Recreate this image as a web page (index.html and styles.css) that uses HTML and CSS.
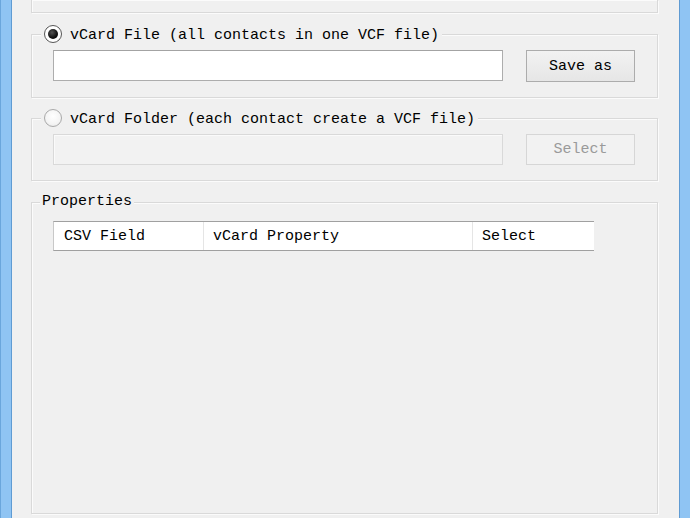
FILE: index.html
```html
<!DOCTYPE html>
<html>
<head>
<meta charset="utf-8">
<link rel="stylesheet" href="styles.css">
</head>
<body>
<div class="window">
  <div class="frame frame-left"></div>
  <div class="client">
    <div class="group group-top"></div>

    <div class="group group-file">
      <div class="group-title">
        <span class="radio checked"></span>
        <span class="label">vCard File (all contacts in one VCF file)</span>
      </div>
      <div class="row">
        <div class="textbox"></div>
        <div class="button">Save as</div>
      </div>
    </div>

    <div class="group group-folder">
      <div class="group-title">
        <span class="radio"></span>
        <span class="label">vCard Folder (each contact create a VCF file)</span>
      </div>
      <div class="row">
        <div class="textbox disabled"></div>
        <div class="button disabled">Select</div>
      </div>
    </div>

    <div class="group group-props">
      <div class="group-title plain">
        <span class="label">Properties</span>
      </div>
      <div class="table-header">
        <div class="col col-csv">CSV Field</div>
        <div class="col col-prop">vCard Property</div>
        <div class="col col-sel">Select</div>
      </div>
    </div>
  </div>
  <div class="frame frame-right"></div>
</div>
</body>
</html>
```

FILE: styles.css
```css
html, body {
  margin: 0;
  padding: 0;
  width: 690px;
  height: 518px;
  overflow: hidden;
  background: #f0f0f0;
}

.window {
  display: flex;
  width: 690px;
  height: 518px;
  font-family: "Liberation Mono", "DejaVu Sans Mono", monospace;
  font-size: 15px;
  color: #000;
}

.frame {
  background: #8fc4f3;
  flex: none;
}
.frame-left {
  width: 10px;
  border-left: 1px solid #6aa6dc;
  border-right: 1px solid #5f9bd3;
}
.frame-right {
  width: 10px;
  border-left: 1px solid #5f9bd3;
  border-right: 1px solid #7fb6e8;
}

.client {
  flex: 1;
  display: flex;
  flex-direction: column;
  padding: 0 21px 4px 19px;
  background: #f0f0f0;
}

.group {
  border: 1px solid #d9d9d9;
  box-shadow: inset 1px 1px 0 #fbfbfb, 1px 1px 0 #fbfbfb;
  flex: none;
}

.group-top {
  height: 12px;
  border-top: none;
}

.group-file {
  margin-top: 21px;
  padding: 0 22px 15px 21px;
}
.group-folder {
  margin-top: 20px;
  padding: 0 22px 15px 21px;
}
.group-props {
  margin-top: 21px;
  flex: 1;
  padding: 0 22px 0 21px;
}

.group-title {
  display: flex;
  align-items: center;
  gap: 8px;
  height: 18px;
  margin: -10px 0 0 -12px;
  padding: 0 3px 0 3px;
  background: #f0f0f0;
  width: fit-content;
  white-space: pre;
  line-height: 18px;
}
.group-title .label {
  position: relative;
  top: 2px;
}
.group-title.plain {
  margin-left: -13px;
  padding: 0 2px;
}
.group-title.plain .label {
  top: 0;
}

.radio {
  width: 16px;
  height: 16px;
  border-radius: 50%;
  border: 1px solid #a9a9a9;
  background: radial-gradient(circle at 50% 40%, #ffffff 0%, #f4f4f4 60%, #e2e2e2 100%);
  box-sizing: content-box;
  position: relative;
  flex: none;
}
.radio.checked {
  border-color: #555;
  background: #fff;
}
.radio.checked::after {
  content: "";
  position: absolute;
  left: 3px;
  top: 3px;
  width: 10px;
  height: 10px;
  border-radius: 50%;
  background: radial-gradient(circle at 40% 35%, #555 0%, #111 60%, #000 100%);
}

.row {
  display: flex;
  gap: 23px;
  margin-top: 7px;
}

.textbox {
  width: 448px;
  height: 29px;
  border: 1px solid #adadad;
  border-top-color: #a3a3a3;
  background: #fff;
  flex: none;
}
.textbox.disabled {
  background: #f2f2f2;
  border-color: #d9d9d9;
  box-shadow: inset 1px 1px 0 #fafafa;
}

.button {
  width: 107px;
  height: 30px;
  border: 1px solid #acacac;
  background: linear-gradient(#f2f2f2, #e6e6e6);
  display: flex;
  align-items: center;
  justify-content: center;
  flex: none;
  white-space: pre;
}
.button.disabled {
  border-color: #d6d6d6;
  background: #f2f2f2;
  color: #9a9a9a;
  height: 29px;
}

.table-header {
  display: flex;
  width: 540px;
  height: 28px;
  margin-top: 10px;
  background: #fff;
  border-top: 1px solid #a0a0a0;
  border-bottom: 1px solid #a0a0a0;
  border-left: 1px solid #c8c8c8;
  line-height: 29px;
}
.col {
  padding-left: 9px;
  box-sizing: border-box;
  white-space: pre;
}
.col-csv {
  width: 150px;
  padding-left: 10px;
  border-right: 1px solid #e5e5e5;
}
.col-prop {
  width: 269px;
  border-right: 1px solid #e5e5e5;
}
.col-sel {
  flex: 1;
}
```
